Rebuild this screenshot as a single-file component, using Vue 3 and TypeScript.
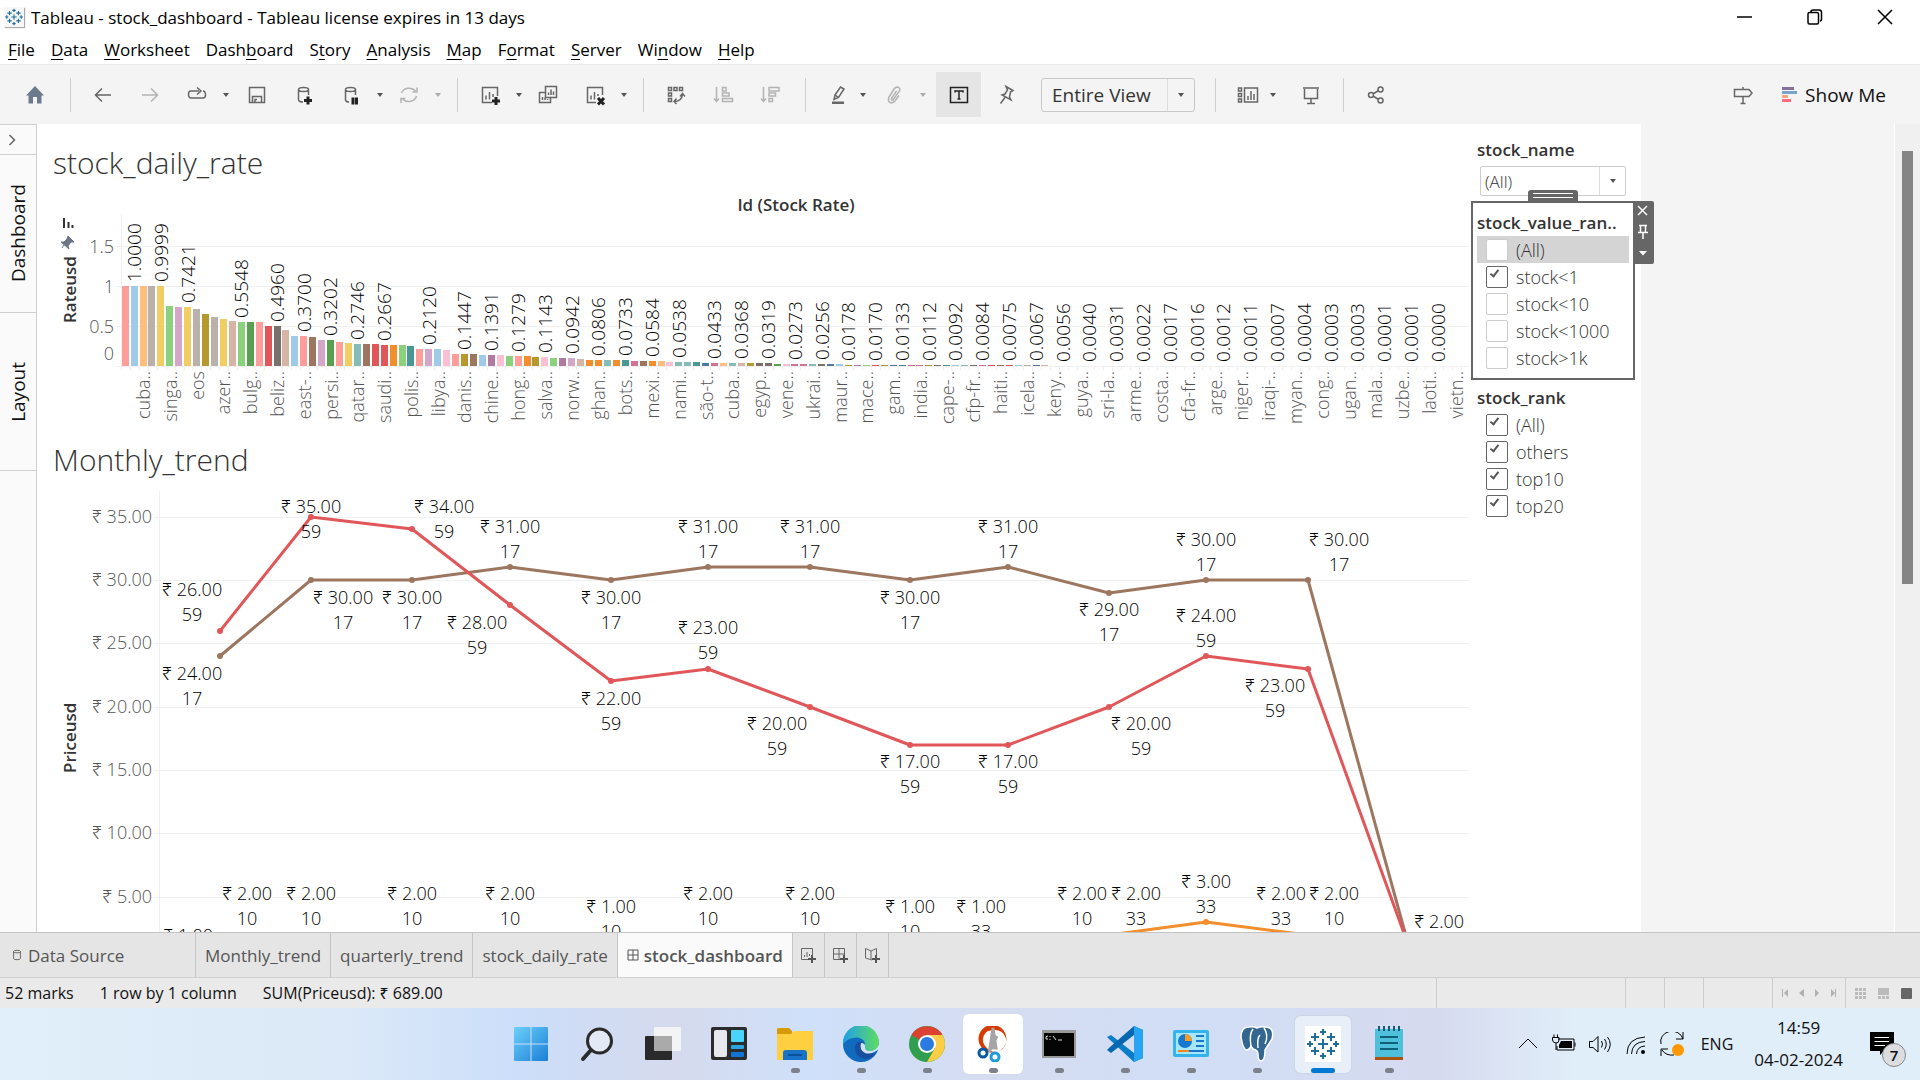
<script setup lang="ts">
import { ref } from 'vue'

interface Shape {
  d: string
  fill?: boolean
  dark?: boolean
}

const menus: [string, string, string][] = [
  ['', 'F', 'ile'],
  ['', 'D', 'ata'],
  ['', 'W', 'orksheet'],
  ['Dash', 'b', 'oard'],
  ['S', 't', 'ory'],
  ['', 'A', 'nalysis'],
  ['', 'M', 'ap'],
  ['F', 'o', 'rmat'],
  ['', 'S', 'erver'],
  ['Wi', 'n', 'dow'],
  ['', 'H', 'elp'],
]

const icons: Record<string, Shape[]> = {
  back: [{ d: 'M20 12H5M11 5.500L4.500 12L11 18.500' }],
  forward: [{ d: 'M4 12H19M13 5.500L19.500 12L13 18.500' }],
  redo: [{ d: 'M14 8H6Q3.500 8 3.500 11Q3.500 15 6 15H18Q20.500 15 20.500 12Q20.500 8 18 8M12 4.500L16 8L12 11.500' }],
  save: [{ d: 'M4.500 4.500H19.500V19.500H4.500ZM7.500 19V13.500H16.500V19M10 19V16.500H12' }],
  dbAdd: [
    { d: 'M6.500 6.500V17Q7 19 11 19M16.500 6.500V12M6.500 6.500A5 2 0 0 1 16.500 6.500A5 2 0 0 1 6.500 6.500' },
    { d: 'M12 17.500H20M16 13.500V21.500', dark: true },
  ],
  dbPause: [
    { d: 'M6.500 6.500V17Q7 19 10 19M16.500 6.500V12M6.500 6.500A5 2 0 0 1 16.500 6.500A5 2 0 0 1 6.500 6.500' },
    { d: 'M14 14.500V21.500M17.500 14.500V21.500', dark: true },
  ],
  refresh: [{ d: 'M4.500 10A8 7 0 0 1 18.500 8M20 4.500V9H15.500M19.500 13A8 7 0 0 1 5.500 16M4 20V15.500H8.500' }],
  sheetAdd: [
    { d: 'M14 19.500H4.500V4.500H19.500V13M8 12.500V16.500M11.500 9V16.500M15 11V14' },
    { d: 'M14 18H22M18 14V22', dark: true },
  ],
  duplicate: [{ d: 'M9.500 3.500H20.500V14.500H9.500ZM12.500 9.500V12M15 6.500V12M17.500 8.500V12M9 9.500H3.500V19.500H14.500V15M6.500 14V17M9 14.500V17M11.500 16V17' }],
  clear: [
    { d: 'M13 19.500H4.500V4.500H19.500V12M8 12.500V16.500M11.500 9V16.500M15 11V13' },
    { d: 'M15 15L21 21.500M21 15L15 21.500', dark: true },
  ],
  swap: [{ d: 'M4.500 4.500H7.500V7.500H4.500ZM10 4.500H13V7.500H10ZM15.500 4.500H18.500V7.500H15.500ZM4.500 10H7.500V13H4.500ZM4.500 15.500H7.500V18.500H4.500ZM10 18.500Q18 18.500 18.500 11M16 13.500L18.500 10.500L21 13.500M12.500 15.500L10 18.500L12.500 21' }],
  asc: [{ d: 'M5.500 4V18M3 15.500L5.500 18.500L8 15.500M11.500 4.500H15V8H11.500ZM11.500 10H18V13H11.500ZM11.500 15.500H21.500V18.500H11.500Z' }],
  desc: [{ d: 'M5.500 4V18M3 15.500L5.500 18.500L8 15.500M11 4.500H21V8H11ZM11 10H17.500V13H11ZM11 15.500H14.500V18.500H11Z' }],
  marker: [
    { d: 'M9 12L14.500 4L18 6L12.500 14.500L8 16.500ZM9 12L12.500 14.500' },
    { d: 'M6 18.500H18V21H6Z', fill: true },
  ],
  clip: [{ d: 'M14.500 8L9.500 15.500Q9 17.500 11 17L17.500 8Q18.500 4.500 15.500 4Q13.500 4 12 6L7 14Q5.500 18 8 19.500Q11 20.500 13 18L17 12.500' }],
  text: [{ d: 'M3.500 4.500H20.500V19.500H3.500ZM8 9.500V8H16V9.500M12 8V16M10.500 16H13.500' }],
  pin: [{ d: 'M12 3.500L19 7.500L16.500 9L15.500 14L17 17L8 12L11 11L13.500 7ZM11 14.500L6.500 20.500' }],
  cards: [{ d: 'M2.500 5H5.500V8H2.500ZM2.500 10.500H5.500V13.500H2.500ZM2.500 16H5.500V19H2.500ZM8.500 5H21.500V19H8.500ZM12 13V17M15 8V17M18 11V17' }],
  present: [{ d: 'M4 5H20M5.500 6V15.500H18.500V6M12 15.500V20M8 20.500H16' }],
  share: [{ d: 'M7 9.500A2.500 2.500 0 1 0 7 14.500A2.500 2.500 0 1 0 7 9.500ZM16.500 4A2.500 2.500 0 1 0 16.500 9A2.500 2.500 0 1 0 16.500 4ZM16.500 15A2.500 2.500 0 1 0 16.500 20A2.500 2.500 0 1 0 16.500 15ZM9 11L14.500 7.500M9 13L14.500 16.500' }],
  guide: [{ d: 'M3.500 6.500H18L21 10L18 13.500H3.500ZM12 4V6.500M12 13.500V20.500M9.500 20.500H14.500' }],
}

interface Tool {
  icon?: string
  kind?: 'caret' | 'sep'
  gap: string
  dim?: boolean
  on?: boolean
}
const toolsA: Tool[] = [
  { kind: 'sep', gap: 'g23' },
  { icon: 'back', gap: 'g20' },
  { icon: 'forward', gap: 'g23', dim: true },
  { icon: 'redo', gap: 'g23' },
  { kind: 'caret', gap: 'g11' },
  { icon: 'save', gap: 'g13' },
  { icon: 'dbAdd', gap: 'g23' },
  { icon: 'dbPause', gap: 'g23' },
  { kind: 'caret', gap: 'g11' },
  { icon: 'refresh', gap: 'g11', dim: true },
  { kind: 'caret', gap: 'g11', dim: true },
  { kind: 'sep', gap: 'g13' },
  { icon: 'sheetAdd', gap: 'g20' },
  { kind: 'caret', gap: 'g11' },
  { icon: 'duplicate', gap: 'g11' },
  { icon: 'clear', gap: 'g23' },
  { kind: 'caret', gap: 'g11' },
  { kind: 'sep', gap: 'g13' },
  { icon: 'swap', gap: 'g20' },
  { icon: 'asc', gap: 'g23', dim: true },
  { icon: 'desc', gap: 'g23', dim: true },
  { kind: 'sep', gap: 'g23' },
  { icon: 'marker', gap: 'g20' },
  { kind: 'caret', gap: 'g7' },
  { icon: 'clip', gap: 'g13', dim: true },
  { kind: 'caret', gap: 'g11', dim: true },
  { icon: 'text', gap: 'g7', on: true },
  { icon: 'pin', gap: 'g13' },
]
const toolsB: Tool[] = [
  { kind: 'sep', gap: 'g20' },
  { icon: 'cards', gap: 'g20' },
  { kind: 'caret', gap: 'g7' },
  { icon: 'present', gap: 'g20' },
  { kind: 'sep', gap: 'g20' },
  { icon: 'share', gap: 'g20' },
]

/* daily rate bars: colour key and height in chart units */
const palette: Record<string, string> = {
  k: '#ff9d9a', a: '#a0cbe8', o: '#ffbe7d', g: '#bab0ac', y: '#f1ce63', n: '#8cd17d', l: '#d4a6c8',
  m: '#b6992d', t: '#d7b5a6', G: '#59a14f', r: '#e15759', d: '#79706e', b: '#9d7660', c: '#86bcb6',
  O: '#f28e2b', T: '#499894', p: '#fabfd2', v: '#b07aa1', R: '#d37295', B: '#4e79a7',
}
const barKeys =
  'kaogynlygmgytnGkrdtakblGkycbrrOnTklapkmbavpnkOmpnvltOOcOTRbOopccTBRoctmddGpRRcdBamvnrmBBRRmdTacdRrbragBt'
const barHeights = [
  80, 80, 80, 80, 80, 60, 59, 59, 57, 52, 49, 47, 45, 44, 44, 44, 40, 40, 36, 30, 30, 29, 26, 26, 24, 23,
  22, 22, 22, 21, 21, 21, 20, 17, 17, 17, 16, 12, 12, 12, 11, 11, 11, 10, 10, 10, 9, 9, 8, 8, 8, 7,
  6, 6, 6, 6, 6, 5, 5, 5, 5, 4, 4, 4, 4, 3, 3, 3, 3, 3, 3, 3, 3, 2, 2, 2, 2, 2, 2, 2, 2,
]
const pitch = 8.93
const bars = barKeys.split('').map((key, i) => ({
  x: Math.floor(122.2 + i * pitch),
  h: barHeights[i] ?? 1,
  color: palette[key],
}))

const valueIndex = [1, 4, 7, 13, 17, 20, 23, 26, 29, 34, 38, 41, 44, 47, 50, 53, 56, 59, 62]
for (let i = 66; i <= 147; i += 3) valueIndex.push(i)
const valueText = (
  '1.0000 0.9999 0.7421 0.5548 0.4960 0.3700 0.3202 0.2746 0.2667 0.2120 0.1447 0.1391 0.1279 0.1143 0.0942 ' +
  '0.0806 0.0733 0.0584 0.0538 0.0433 0.0368 0.0319 0.0273 0.0256 0.0178 0.0170 0.0133 0.0112 0.0092 0.0084 ' +
  '0.0075 0.0067 0.0056 0.0040 0.0031 0.0022 0.0017 0.0016 0.0012 0.0011 0.0007 0.0004 0.0003 0.0003 0.0001 ' +
  '0.0001 0.0000'
).split(' ')
const values = valueText.map((text, i) => {
  const at = valueIndex[i]
  return { text, x: Math.round(132 + at * pitch), y: 362 - (at < 104 ? (barHeights[at] ?? 1) : 0) }
})

const names = (
  'cuba.. singa.. eos azer.. bulg.. beliz.. east-.. persi.. qatar.. saudi.. polis.. libya.. danis.. chine.. ' +
  'hong.. salva.. norw.. ghan.. bots.. mexi.. nami.. são-t.. cuba.. egyp.. vene.. ukrai.. maur.. mace.. ' +
  'gam.. india.. cape-.. cfp-fr.. haiti.. icela.. keny.. guya.. sri-la.. arme.. costa.. cfa-fr.. arge.. ' +
  'niger.. iraqi-.. myan.. cong.. ugan.. mala.. uzbe.. laoti.. vietn..'
)
  .split(' ')
  .map((text, i) => ({ text, x: Math.round(150 + i * 3 * pitch) }))
const ticks = Array.from({ length: 151 }, (_, i) => Math.round(121 + i * pitch))
const rateAxis: [string, number][] = [['1.5', 253], ['1', 293], ['0.5', 333], ['0', 360]]

/* monthly trend */
const monthX = [220, 311, 412, 510, 611, 708, 810, 910, 1008, 1109, 1206, 1308, 1409]
const priceY = (v: number) => Math.round(960 - v * 12.67)
const line = (vals: number[], from = 0) => vals.map((v, i) => `${monthX[i + from]},${priceY(v)}`).join(' ')
const series = [
  { color: '#9d7660', from: 0, v: [24, 30, 30, 31, 30, 31, 31, 30, 31, 29, 30, 30, 1] },
  { color: '#e15759', from: 0, v: [26, 35, 34, 28, 22, 23, 20, 17, 17, 20, 24, 23, 1] },
  { color: '#f28e2b', from: 9, v: [2, 3, 2] },
]
const priceAxis = [35, 30, 25, 20, 15, 10, 5]
const marks: [number, number, string, string][] = [
  [192, 596, '26', '59'], [311, 513, '35', '59'], [444, 513, '34', '59'], [477, 629, '28', '59'],
  [611, 705, '22', '59'], [708, 634, '23', '59'], [777, 730, '20', '59'], [910, 768, '17', '59'],
  [1008, 768, '17', '59'], [1141, 730, '20', '59'], [1206, 622, '24', '59'], [1275, 692, '23', '59'],
  [192, 680, '24', '17'], [343, 604, '30', '17'], [412, 604, '30', '17'], [510, 533, '31', '17'],
  [611, 604, '30', '17'], [708, 533, '31', '17'], [810, 533, '31', '17'], [910, 604, '30', '17'],
  [1008, 533, '31', '17'], [1109, 616, '29', '17'], [1206, 546, '30', '17'], [1339, 546, '30', '17'],
  [247, 900, '2', '10'], [311, 900, '2', '10'], [412, 900, '2', '10'], [510, 900, '2', '10'],
  [611, 913, '1', '10'], [708, 900, '2', '10'], [810, 900, '2', '10'], [910, 913, '1', '10'],
  [981, 913, '1', '33'], [1082, 900, '2', '10'], [1136, 900, '2', '33'], [1206, 888, '3', '33'],
  [1281, 900, '2', '33'], [1334, 900, '2', '10'], [1439, 928, '2', ''], [188, 942, '1', ''],
]

const valueRange = ref([
  { label: '(All)', on: false },
  { label: 'stock<1', on: true },
  { label: 'stock<10', on: false },
  { label: 'stock<1000', on: false },
  { label: 'stock>1k', on: false },
])
const rank = ref([
  { label: '(All)', on: true },
  { label: 'others', on: true },
  { label: 'top10', on: true },
  { label: 'top20', on: true },
])

const crosses: [number, number, number][] = [
  [18, 18, 5], [10, 11, 4], [26, 11, 4], [10, 25, 4], [26, 25, 4], [18, 6, 3], [18, 30, 3], [5, 18, 3], [31, 18, 3],
]
const crossPath = crosses.map(([x, y, r]) => `M${x - r} ${y}H${x + r}M${x} ${y - r}V${y + r}`).join('')
</script>

<template>
  <div class="desktop">
    <header class="titlebar">
      <svg class="logo" viewBox="0 0 36 36" aria-hidden="true"><path :d="crossPath" /></svg>
      <span class="caption">Tableau - stock_dashboard - Tableau license expires in 13 days</span>
      <div class="winbtns">
        <button aria-label="Minimize"><svg viewBox="0 0 16 16"><path d="M0 8H15" /></svg></button>
        <button aria-label="Restore">
          <svg viewBox="0 0 16 16"><path d="M1 5Q1 3.500 2.500 3.500H10Q11.500 3.500 11.500 5V13.500Q11.500 15 10 15H2.500Q1 15 1 13.500ZM4 3V2.500Q4 1 6 1H12Q14.500 1 14.500 3.500V10Q14.500 12 13 12" /></svg>
        </button>
        <button aria-label="Close"><svg viewBox="0 0 16 16"><path d="M1 1L15 15M15 1L1 15" /></svg></button>
      </div>
    </header>

    <nav class="menubar">
      <button v-for="m in menus" :key="m.join('')">{{ m[0] }}<u>{{ m[1] }}</u>{{ m[2] }}</button>
    </nav>

    <div class="toolbar">
      <button class="tool" aria-label="Start page">
        <svg viewBox="0 0 24 24"><path class="home" d="M12 3L21 12.500H18.500V20.500H14V14H10V20.500H5.500V12.500H3Z" /></svg>
      </button>
      <template v-for="(t, i) in toolsA" :key="'a' + i">
        <i v-if="t.kind === 'sep'" class="sep" :class="t.gap"></i>
        <button v-else-if="t.kind === 'caret'" class="caret" :class="[t.gap, { dim: t.dim }]" aria-label="More"></button>
        <button v-else class="tool" :class="[t.gap, { dim: t.dim, on: t.on }]" :aria-label="t.icon">
          <svg viewBox="0 0 24 24">
            <path v-for="(s, j) in icons[t.icon!]" :key="j" :d="s.d" :class="{ solid: s.fill, dark: s.dark }" />
          </svg>
        </button>
      </template>
      <div class="fit g23">
        <select aria-label="Fit"><option>Entire View</option></select>
        <i class="arrow"></i>
      </div>
      <template v-for="(t, i) in toolsB" :key="'b' + i">
        <i v-if="t.kind === 'sep'" class="sep" :class="t.gap"></i>
        <button v-else-if="t.kind === 'caret'" class="caret" :class="t.gap" aria-label="More"></button>
        <button v-else class="tool" :class="t.gap" :aria-label="t.icon">
          <svg viewBox="0 0 24 24"><path v-for="(s, j) in icons[t.icon!]" :key="j" :d="s.d" /></svg>
        </button>
      </template>
      <div class="tools-end">
        <button class="tool" aria-label="Data guide">
          <svg viewBox="0 0 24 24"><path v-for="(s, j) in icons.guide" :key="j" :d="s.d" /></svg>
        </button>
        <button class="showme">
          <svg viewBox="0 0 16 16" aria-hidden="true">
            <rect width="12" height="3" fill="#866f9a" /><rect y="4" width="15" height="3" fill="#7aa3cc" />
            <rect y="8" width="6" height="3" fill="#f4a582" /><rect y="12" width="9" height="3" fill="#ff6b7a" />
          </svg>
          Show Me
        </button>
      </div>
    </div>

    <main class="work">
      <aside class="rail">
        <button class="expand" aria-label="Expand"><svg viewBox="0 0 8 12"><path d="M1.500 1L6.500 6L1.500 11" /></svg></button>
        <button class="vtab"><span>Dashboard</span></button>
        <button class="vtab"><span>Layout</span></button>
      </aside>

      <section class="board">
        <div class="charts">
          <h2 class="first">stock_daily_rate</h2>
          <svg class="chart" viewBox="37 190 1434 250">
            <g class="grid">
              <path d="M116 246.500H1469M116 286.500H1469M116 326.500H1469M116 366.500H1469M121.500 214V366" />
              <path v-for="x in ticks" :key="x" :d="`M${x}.500 366V370`" />
            </g>
            <text class="head" x="796" y="211" text-anchor="middle">Id (Stock Rate)</text>
            <text v-for="[t, y] in rateAxis" :key="t" class="axis" x="114" :y="y" text-anchor="end">{{ t }}</text>
            <text class="head" transform="translate(76 323) rotate(-90)">Rateusd</text>
            <path class="pinned" d="M68 236L74 242L71 242L68 246L69 249L61 242L64 242L67 239ZM64 245L62 248" />
            <path class="sorted" d="M64 218V228M68.500 222V228M72.500 225V228" />
            <rect v-for="b in bars" :key="b.x" :x="b.x" :y="366 - b.h" width="7" :height="b.h" :fill="b.color" />
            <text v-for="v in values" :key="v.x" class="val" :transform="`translate(${v.x} ${v.y}) rotate(-90)`">{{ v.text }}</text>
            <text v-for="n in names" :key="n.x" class="cat" text-anchor="end" :transform="`translate(${n.x} 371) rotate(-90)`">{{ n.text }}</text>
          </svg>
          <h2>Monthly_trend</h2>
          <svg class="chart" viewBox="37 490 1434 450">
            <g class="grid">
              <path v-for="p in priceAxis" :key="p" :d="`M154 ${priceY(p)}.500H1469`" />
              <path d="M159.500 491V940" />
            </g>
            <text v-for="p in priceAxis" :key="p" class="axis" x="152" :y="priceY(p) + 6" text-anchor="end">₹ {{ p }}.00</text>
            <text class="head" transform="translate(76 773) rotate(-90)">Priceusd</text>
            <g v-for="s in series" :key="s.color">
              <polyline :points="line(s.v, s.from)" :stroke="s.color" class="trend" />
              <circle v-for="(v, i) in s.v" :key="i" :cx="monthX[i + s.from]" :cy="priceY(v)" r="3" :fill="s.color" />
            </g>
            <template v-for="(m, i) in marks" :key="i">
              <text class="mark" :x="m[0]" :y="m[1]" text-anchor="middle">₹ {{ m[2] }}.00</text>
              <text v-if="m[3]" class="mark" :x="m[0]" :y="m[1] + 25" text-anchor="middle">{{ m[3] }}</text>
            </template>
          </svg>
        </div>

        <div class="filters">
          <label class="ftitle" for="stock-name">stock_name</label>
          <div class="namebox">
            <select id="stock-name"><option>(All)</option></select>
            <i class="arrow"></i>
          </div>
          <fieldset class="picked">
            <div class="grip"></div>
            <div class="ftitle">stock_value_ran..</div>
            <label v-for="(o, i) in valueRange" :key="o.label" class="opt" :class="{ hover: i === 0 }">
              <input v-model="o.on" type="checkbox" />{{ o.label }}
            </label>
            <div class="handle">
              <svg viewBox="0 0 20 62" aria-hidden="true">
                <path d="M5 5L14 14M14 5L5 14M6 24.500H14M7.500 24.500V31M12.500 24.500V31M5 31.500H15M10 32V38" />
                <path d="M6 50H14L10 54.500Z" fill="#fff" stroke="none" />
              </svg>
            </div>
          </fieldset>
          <fieldset class="ranks">
            <div class="ftitle">stock_rank</div>
            <label v-for="o in rank" :key="o.label" class="opt">
              <input v-model="o.on" type="checkbox" />{{ o.label }}
            </label>
          </fieldset>
        </div>
      </section>
      <div class="canvas"></div>
      <div class="scroll"><div class="thumb"></div></div>
    </main>

    <nav class="tabs">
      <button class="tab source">
        <svg viewBox="0 0 10 14" aria-hidden="true"><path d="M1 3V11A4 1.500 0 0 0 9 11V3M1 3A4 1.500 0 0 1 9 3A4 1.500 0 0 1 1 3" /></svg>Data Source
      </button>
      <button class="tab">Monthly_trend</button>
      <button class="tab">quarterly_trend</button>
      <button class="tab">stock_daily_rate</button>
      <button class="tab active">
        <svg viewBox="0 0 12 12" aria-hidden="true"><path d="M1 1H11V11H1ZM6 1V11M1 6H11" /></svg>stock_dashboard
      </button>
      <button class="add" aria-label="New worksheet">
        <svg viewBox="0 0 16 16"><path d="M8 12.500H1.500V1.500H12.500V8M4.500 8V10M7 5V10M9.500 7V9" /><path class="plus" d="M8 12H16M12 8V16" /></svg>
      </button>
      <button class="add" aria-label="New dashboard">
        <svg viewBox="0 0 16 16"><path d="M8 12.500H1.500V1.500H12.500V8M7 1.500V12.500M1.500 7H12.500" /><path class="plus" d="M8 12H16M12 8V16" /></svg>
      </button>
      <button class="add" aria-label="New story">
        <svg viewBox="0 0 16 16"><path d="M8 13L1.500 11V1.500L7 4L12.500 1.500V8M7 4V12" /><path class="plus" d="M8 12H16M12 8V16" /></svg>
      </button>
    </nav>

    <footer class="status">
      <span>52 marks</span><span>1 row by 1 column</span><span>SUM(Priceusd): ₹ 689.00</span>
      <div class="cells">
        <i class="c189"></i><i class="c39"></i><i class="c39"></i><i class="c69"></i>
        <div class="c73 pager">
          <svg viewBox="0 0 56 10" aria-hidden="true"><path d="M1 1H2V9H1ZM7 1V9L3 5ZM23 1V9L18 5ZM34 1V9L38 5ZM50 1V9L54 5ZM54 1H55V9H54Z" /></svg>
        </div>
        <div class="views">
          <svg viewBox="0 0 58 12" aria-hidden="true">
            <path fill="#bbb" d="M0 1H3V4H0ZM4 1H7V4H4ZM8 1H11V4H8ZM0 5H3V8H0ZM4 5H7V8H4ZM8 5H11V8H8ZM0 9H3V12H0ZM4 9H7V12H4ZM8 9H11V12H8ZM23 1H34V8H23ZM23 9H26V12H23ZM27 9H30V12H27ZM31 9H34V12H31Z" />
            <rect x="46" y="1" width="11" height="11" rx="1" fill="#666" />
          </svg>
        </div>
      </div>
    </footer>

    <div class="taskbar">
      <div class="apps">
        <button class="app" aria-label="Start">
          <svg viewBox="0 0 36 36"><defs><linearGradient id="win" x2="1" y2="1"><stop stop-color="#6cd0fb" /><stop offset="1" stop-color="#1b7fd6" /></linearGradient></defs>
            <path fill="url(#win)" d="M1 2Q1 1 2 1H17.500V17.500H1ZM18.500 1H34Q35 1 35 2V17.500H18.500ZM1 18.500H17.500V35H2Q1 35 1 34ZM18.500 18.500H35V34Q35 35 34 35H18.500Z" /></svg>
        </button>
        <button class="app" aria-label="Search">
          <svg viewBox="0 0 36 36"><circle cx="20.500" cy="15" r="12" fill="#e3e9f5" stroke="#2b2b2b" stroke-width="3" /><path d="M12 24L4 33" stroke="#2b2b2b" stroke-width="4" stroke-linecap="round" /></svg>
        </button>
        <button class="app" aria-label="Task view">
          <svg viewBox="0 0 36 36"><rect y="10" width="27" height="24" rx="1" fill="#2a2a2a" /><rect x="9" y="1" width="27" height="24" rx="1" fill="#f4f4f4" /><path d="M9 10H27V25H9Z" fill="#aaa" /></svg>
        </button>
        <button class="app" aria-label="Widgets">
          <svg viewBox="0 0 36 36"><rect y="1" width="36" height="33" rx="2" fill="#2b2b2b" /><rect x="3" y="4" width="13" height="27" rx="2" fill="#e6e8ec" /><rect x="20" y="4" width="13" height="12" rx="1" fill="#4bd4fb" /><rect x="20" y="19" width="13" height="4" rx="1" fill="#2aa5e2" /><rect x="20" y="26" width="13" height="5" rx="1" fill="#1173d4" /></svg>
        </button>
        <button class="app run" aria-label="File Explorer">
          <svg viewBox="0 0 36 36"><path d="M0 3Q0 2 2 2H12L15 5V9H0Z" fill="#d99a08" /><path d="M0 8H14L17 5H36V34H0Z" fill="#ffcf42" /><path d="M6 34V27Q6 24 9 24H27Q30 24 30 27V34Z" fill="#1673c8" /><path d="M11 29H25" stroke="#0b4f94" stroke-width="2" /></svg>
        </button>
        <button class="app run" aria-label="Edge">
          <svg viewBox="0 0 36 36"><defs><linearGradient id="eg" x2="1"><stop stop-color="#1d9fe8" /><stop offset="1" stop-color="#5fdc62" /></linearGradient></defs>
            <circle cx="18" cy="18" r="18" fill="#0f6ac0" /><path d="M0 18A18 18 0 0 1 36 16Q36 25 27 25Q21 25 21 21Q23 18 21 15Q17 10 10 12Q4 13 0 18Z" fill="url(#eg)" /><path d="M12 20Q11 32 24 33Q30 31 33 27Q27 29 22 26Q18 23 21 17Q14 14 12 20Z" fill="#174f9c" /><path d="M18 17Q16 24 22 27Q28 29 36 23V18Q34 25 27 25Q21 25 22 20Q22 17 18 17Z" fill="#d6e0f3" /></svg>
        </button>
        <button class="app run" aria-label="Chrome">
          <svg viewBox="0 0 36 36"><circle cx="18" cy="18" r="18" fill="#2f9e4f" /><path d="M18 18L2.500 9A18 18 0 0 1 33.500 9Z" fill="#dc4132" /><path d="M18 9H33.500A18 18 0 0 1 18 36L26 22Z" fill="#fdce43" /><circle cx="18" cy="18" r="9" fill="#fff" /><circle cx="18" cy="18" r="7" fill="#2a7ae2" /></svg>
        </button>
        <button class="app run lit" aria-label="Snip">
          <svg viewBox="0 0 36 36"><path d="M10 1A14 14 0 1 1 9 24A14 14 0 0 1 10 1M13 5A10 10 0 0 0 11 21A11 11 0 1 0 19 4Z" fill="#d83b01" fill-rule="evenodd" /><path d="M18 2L21 22L15 22ZM22 10L14 26" stroke="#a5a5a5" stroke-width="3" fill="#bbb" /><circle cx="8" cy="27" r="4" fill="none" stroke="#0a58a6" stroke-width="3" /><circle cx="20" cy="31" r="4" fill="none" stroke="#1e9be0" stroke-width="3" /></svg>
        </button>
        <button class="app run" aria-label="Command Prompt">
          <svg viewBox="0 0 36 36"><rect x="1" y="4" width="34" height="28" fill="#9a9a9a" /><path d="M3 7H33V30H3Z" fill="#050505" /><path d="M7 10Q4 10 5 13H7M9 10V11M9 13V14M12 10L15 14M17 14H21" stroke="#ddd" fill="none" /></svg>
        </button>
        <button class="app run" aria-label="VS Code">
          <svg viewBox="0 0 36 36"><path d="M27 0L36 4V32L27 36L2 13L0 11L4 9L27 27Z" fill="#0a7cc8" /><path d="M27 0L36 4V32L27 36Z" fill="#27a5f2" /><path d="M27 9L4 27L0 24L3 21L27 0Z" fill="#0768b0" /></svg>
        </button>
        <button class="app run" aria-label="Control Panel">
          <svg viewBox="0 0 36 36"><rect y="4" width="36" height="27" rx="2" fill="#33b4ec" /><rect x="3" y="7" width="30" height="21" fill="#a8e6fb" /><circle cx="12" cy="15" r="7" fill="#1679cf" /><path d="M12 15V8A7 7 0 0 1 19 15Z" fill="#f99b22" /><path d="M23 10H31M23 15H31M23 20H31" stroke="#1679cf" stroke-width="2" /><path d="M5 25H31" stroke="#1679cf" stroke-width="2" /><path d="M5 25H16" stroke="#f9861a" stroke-width="2" /></svg>
        </button>
        <button class="app run" aria-label="pgAdmin">
          <svg viewBox="0 0 36 36"><path d="M10 1Q2 1 2 11Q4 24 8 24Q10 24 12 20L14 23Q19 24 19 28Q19 35 22 35Q26 35 26 24Q29 19 33 13Q36 1 26 1Q22 0 18 2Q14 0 10 1Z" fill="#336791" stroke="#fff" stroke-width="1.500" /><path d="M14 3Q10 8 12 20M25 2Q30 9 26 18M21 9Q18 12 19 22" fill="none" stroke="#fff" stroke-width="1.500" /></svg>
        </button>
        <button class="app run current" aria-label="Tableau">
          <svg class="tableau" viewBox="0 0 36 36"><rect width="36" height="36" fill="#fff" /><path :d="crossPath" /></svg>
        </button>
        <button class="app run" aria-label="Notepad">
          <svg viewBox="0 0 36 36"><path d="M4 3H32V31H4Z" fill="#4fc0dc" /><path d="M4 31H32L32 34H4Z" fill="#a8530f" /><path d="M9 11H27M9 17H27M9 23H27" stroke="#0d6079" stroke-width="2" /><path d="M8 0V5M13 0V5M18 0V5M23 0V5M28 0V5" stroke="#155a70" stroke-width="2" /></svg>
        </button>
      </div>
      <div class="tray">
        <svg class="w24" viewBox="0 0 24 24" aria-hidden="true"><path d="M3 16L12 7L21 16" /></svg>
        <svg class="w24" viewBox="0 0 24 24" aria-hidden="true"><path d="M6 7H22V18H5V14M23 10.500V14.500" /><path d="M9 9H20V16H7V13Z" fill="#000" stroke="none" /><path d="M2 5V2.500M5.500 5V2.500M0.500 5.500H7V8Q7 11 4 11Q1 11 0.500 8ZM4 11V18" /></svg>
        <svg class="w24" viewBox="0 0 24 24" aria-hidden="true"><path d="M1.500 9.500H5L10 4.500V20L5 15.500H1.500ZM13.500 9Q15.500 12 13.500 15.500M16.500 7Q20 12 16.500 17.500M19.500 5Q25 12 19.500 20" /></svg>
        <svg class="w24" viewBox="0 0 24 24" aria-hidden="true"><path d="M3 22Q3 6 21 5M7.500 22Q8 10 21 9.500M12.500 22Q13 14.500 21 14" /><circle cx="19" cy="20" r="2" fill="#000" stroke="none" /></svg>
        <svg class="w24" viewBox="0 0 24 24" aria-hidden="true"><path d="M1 12A11 10 0 0 1 23 7M23 0V7H16M1 24V17H8M2 18Q6 24 14 23" /><circle cx="18" cy="18" r="6" fill="#ff9800" stroke="none" /></svg>
        <span class="lang">ENG</span>
        <time class="clock">14:59<br />04-02-2024</time>
        <div class="notes">
          <svg viewBox="0 0 26 26" aria-hidden="true"><path d="M1 1H25V20H15L11 24V20H1Z" fill="#000" stroke="none" /><path d="M5.500 6.500H20M5.500 10.500H20M5.500 14.500H16" stroke="#fff" /></svg>
          <span>7</span>
        </div>
      </div>
    </div>
  </div>
</template>

<style>
body {
  margin: 0;
}
</style>

<style scoped>
.desktop {
  display: flex;
  flex-direction: column;
  height: 100vh;
  background: #fff;
  color: #333;
  font-family: 'Open Sans', 'Noto Sans', sans-serif;
  font-size: 18px;
  overflow: hidden;
}
button {
  border: 0;
  padding: 0;
  margin: 0;
  background: none;
  font: inherit;
  color: inherit;
}
svg {
  display: block;
  fill: none;
}
.titlebar {
  display: flex;
  align-items: center;
  height: 34px;
  padding-left: 4px;
  color: #000;
  font-size: 17px;
}
.logo {
  width: 20px;
  height: 20px;
  margin-right: 7px;
  background: #f7f7f7;
  box-shadow: 1px 1px 1px #aaa;
}
.logo path,
.tableau path {
  stroke: #1f6e9c;
  stroke-width: 2;
}
.winbtns {
  display: flex;
  margin-left: auto;
}
.winbtns button {
  width: 70px;
  display: flex;
  justify-content: center;
}
.winbtns svg {
  width: 16px;
  height: 16px;
  stroke: #000;
  stroke-width: 1.500;
}
.menubar {
  display: flex;
  gap: 16px;
  height: 30px;
  padding-left: 8px;
  align-items: center;
  color: #000;
  font-size: 17px;
}
u {
  text-underline-offset: 3px;
}
.toolbar {
  display: flex;
  align-items: center;
  height: 60px;
  box-sizing: border-box;
  padding: 0 34px 0 23px;
  background: #f4f4f4;
  border-top: 1px solid #ebebeb;
}
.tool {
  width: 24px;
  height: 45px;
  display: flex;
  align-items: center;
  justify-content: center;
  flex: none;
}
.tool svg {
  width: 24px;
  height: 24px;
  stroke: #666;
  stroke-width: 1.500;
}
.tool .home {
  fill: #6b7a8c;
  stroke: none;
}
.tool .solid {
  fill: #666;
  stroke: none;
}
.tool .dark {
  stroke: #222;
  stroke-width: 3;
}
.tool.on {
  width: 45px;
  background: #e5e5e5;
}
.tool.on svg {
  stroke: #222;
}
.dim {
  opacity: 0.45;
}
.sep {
  width: 1px;
  height: 34px;
  background: #d0d0d0;
}
.caret {
  width: 12px;
  height: 24px;
  position: relative;
}
.caret::after,
.arrow::after {
  content: '';
  display: block;
  margin: auto;
  width: 0;
  border: 3px solid transparent;
  border-top: 4px solid #555;
  border-bottom: 0;
}
.g7 {
  margin-left: 7px;
}
.g11 {
  margin-left: 11px;
}
.g13 {
  margin-left: 13px;
}
.g20 {
  margin-left: 20px;
}
.g23 {
  margin-left: 23px;
}
select {
  appearance: none;
  border: 0;
  margin: 0;
  background: transparent;
  font: inherit;
  color: inherit;
  outline: 0;
}
.fit {
  display: flex;
  align-items: stretch;
  width: 154px;
  height: 34px;
  box-sizing: border-box;
  border: 1px solid #c8c8c8;
  border-radius: 3px;
  font-size: 19px;
}
.fit select {
  flex: 1;
  min-width: 0;
  padding-left: 10px;
}
.fit .arrow {
  width: 26px;
  display: flex;
  align-items: center;
  border-left: 1px solid #ddd;
}
.tools-end {
  display: flex;
  align-items: center;
  gap: 27px;
  margin-left: auto;
}
.showme {
  display: flex;
  align-items: center;
  gap: 7px;
  color: #111;
  font-size: 19px;
  white-space: nowrap;
}
.showme svg {
  width: 16px;
  height: 16px;
}
.work {
  display: flex;
  flex: 1;
  min-height: 0;
  overflow: hidden;
}
.rail {
  width: 36px;
  flex: none;
  background: #fafafa;
  border-right: 1px solid #d0d0d0;
  border-top: 1px solid #d0d0d0;
  color: #111;
}
.expand {
  display: block;
  width: 36px;
  height: 30px;
  border-bottom: 1px solid #d0d0d0;
}
.expand svg {
  width: 8px;
  height: 12px;
  margin-left: 8px;
  stroke: #666;
  stroke-width: 1.500;
}
.vtab {
  display: flex;
  align-items: center;
  justify-content: center;
  width: 36px;
  height: 158px;
  box-sizing: border-box;
  border-bottom: 1px solid #d0d0d0;
  font-size: 19px;
}
.vtab span {
  writing-mode: vertical-rl;
  transform: rotate(180deg);
}
.board {
  display: flex;
  flex: 1;
  min-width: 0;
  background: #fff;
}
.charts {
  flex: 1;
  min-width: 0;
}
.charts h2 {
  margin: 0;
  padding-left: 16px;
  height: 50px;
  line-height: 40px;
  font-size: 30px;
  font-weight: 300;
  color: #333;
}
.charts h2.first {
  height: 47px;
  padding-top: 19px;
}
.chart {
  width: 100%;
  height: auto;
}
.grid {
  stroke: #f0f0f0;
}
.head {
  font-size: 17px;
  font-weight: 600;
  fill: #333;
}
.axis,
.cat {
  font-size: 18px;
  font-weight: 300;
  fill: #555;
}
.val {
  font-size: 19px;
  font-weight: 300;
  fill: #000;
}
.mark {
  font-size: 18px;
  font-weight: 300;
  fill: #000;
}
.pinned {
  fill: #6b7688;
  stroke: #6b7688;
}
.sorted {
  stroke: #333;
  stroke-width: 2;
}
.trend {
  stroke-width: 3;
  stroke-linejoin: round;
}
.filters {
  width: 170px;
  flex: none;
  padding-top: 12px;
}
.ftitle {
  display: block;
  padding-left: 6px;
  line-height: 27px;
  font-size: 17px;
  font-weight: 600;
  color: #333;
  white-space: nowrap;
}
.namebox {
  display: flex;
  align-items: stretch;
  width: 146px;
  height: 30px;
  box-sizing: border-box;
  margin: 3px 0 5px 9px;
  border: 1px solid #ccc;
  border-radius: 2px;
  font-size: 17px;
  font-weight: 300;
}
.namebox select {
  flex: 1;
  min-width: 0;
  padding-left: 4px;
}
.namebox .arrow {
  width: 25px;
  display: flex;
  align-items: center;
  border-left: 1px solid #ddd;
}
fieldset {
  margin: 0;
  border: 0;
  padding: 0;
  min-width: 0;
}
.picked {
  position: relative;
  width: 164px;
  height: 179px;
  box-sizing: border-box;
  border: 2px solid #666;
  padding: 6px 4px 0;
}
.picked .ftitle {
  padding-left: 0;
}
.grip {
  position: absolute;
  left: 55px;
  top: -13px;
  width: 50px;
  height: 12px;
  box-sizing: border-box;
  border-radius: 3px 3px 0 0;
  border: solid #666;
  border-width: 3px 5px 4px;
  background: linear-gradient(#fff 1px, #666 1px, #666 4px, #fff 4px);
}
.handle {
  position: absolute;
  left: 160px;
  top: -2px;
  width: 21px;
  height: 63px;
  background: #666;
  border-radius: 0 2px 2px 0;
}
.handle svg {
  width: 20px;
  height: 62px;
  stroke: #fff;
  stroke-width: 1.500;
}
.opt {
  display: flex;
  align-items: center;
  gap: 8px;
  height: 27px;
  padding-left: 9px;
  font-size: 18px;
  font-weight: 300;
}
.opt.hover {
  background: #d4d4d4;
}
.ranks {
  padding-top: 4px;
}
.ranks .opt {
  padding-left: 15px;
}
input {
  appearance: none;
  position: relative;
  width: 22px;
  height: 22px;
  flex: none;
  margin: 0;
  border: 1px solid #ccc;
  border-radius: 2px;
  background: #fff;
}
input:checked {
  border-color: #666;
}
input:checked::after {
  content: '';
  position: absolute;
  left: 5px;
  top: 1px;
  width: 3px;
  height: 7px;
  border: solid #555;
  border-width: 0 2px 2px 0;
  transform: rotate(38deg);
}
.canvas {
  width: 253px;
  flex: none;
  background: #f4f4f4;
  border-right: 1px solid #fff;
}
.scroll {
  width: 25px;
  flex: none;
  background: #f0f0f0;
}
.thumb {
  width: 11px;
  height: 433px;
  margin: 27px 0 0 7px;
  background: #858585;
}
.tabs {
  display: flex;
  height: 45px;
  flex: none;
  box-sizing: border-box;
  border-top: 1px solid #c4c4c4;
  background: #e5e5e5;
  color: #555;
  font-size: 17px;
}
.tab,
.add {
  display: flex;
  align-items: center;
  justify-content: center;
  padding: 0 9px;
  border-right: 1px solid #c4c4c4;
  white-space: nowrap;
}
.tab svg {
  stroke: #555;
  width: 12px;
  height: 12px;
  margin-right: 5px;
}
.tab.source {
  width: 196px;
  box-sizing: border-box;
  justify-content: flex-start;
  padding-left: 11px;
}
.tab.active {
  background: #fafafa;
  font-weight: 600;
}
.add {
  width: 32px;
  box-sizing: border-box;
  padding: 0;
}
.add svg {
  width: 16px;
  height: 16px;
  stroke: #666;
}
.plus {
  stroke: #555;
  stroke-width: 2;
}
.status {
  display: flex;
  align-items: center;
  gap: 26px;
  height: 31px;
  flex: none;
  box-sizing: border-box;
  padding-left: 5px;
  border-top: 1px solid #d0d0d0;
  background: #eaeaea;
  color: #111;
  font-size: 16px;
}
.cells {
  display: flex;
  align-self: stretch;
  margin-left: auto;
}
.cells > * {
  box-sizing: border-box;
  border-left: 1px solid #ccc;
}
.c189 {
  width: 189px;
}
.c39 {
  width: 39px;
}
.c69 {
  width: 69px;
}
.c73 {
  width: 73px;
}
.pager,
.views {
  display: flex;
  align-items: center;
}
.pager svg {
  width: 56px;
  height: 10px;
  margin-left: 8px;
  fill: #b0b0b0;
}
.views {
  width: 75px;
}
.views svg {
  width: 58px;
  height: 12px;
  margin-left: 9px;
}
.taskbar {
  display: grid;
  grid-template-columns: 1fr auto 1fr;
  align-items: center;
  height: 72px;
  flex: none;
  background: linear-gradient(90deg, #e0eff9 0%, #dbe9f8 18%, #ccdefa 27%, #d5daed 35%, #cfe0fa 42%, #d5dcf0 52%, #d0def6 62%, #d6daef 75%, #e0eef9 82%, #e0eef9 100%);
  color: #111;
}
.apps {
  grid-column: 2;
  display: flex;
}
.app {
  position: relative;
  display: flex;
  align-items: center;
  justify-content: center;
  width: 60px;
  height: 60px;
  margin: 0 3px;
  border-radius: 6px;
}
.app svg {
  width: 36px;
  height: 36px;
}
.app.run::after {
  content: '';
  position: absolute;
  left: 26px;
  bottom: 1px;
  width: 9px;
  height: 5px;
  border-radius: 3px;
  background: #7d818c;
}
.app.lit {
  background: #fff;
}
.app.current {
  width: 56px;
  height: 57px;
  margin: 0 5px;
  align-self: center;
  background: #e9eff9;
  box-shadow: 0 0 1px 1px #ccd5e6;
}
.app.current::after {
  left: 16px;
  bottom: 0;
  width: 24px;
  background: #0078d4;
}
.tray {
  display: flex;
  align-items: center;
  justify-content: flex-end;
  gap: 12px;
  height: 72px;
  padding-right: 25px;
}
.tray svg {
  stroke: #000;
}
.w24 {
  width: 24px;
  height: 24px;
}
.lang {
  margin-left: 5px;
  font-size: 16px;
}
.clock {
  margin-left: 9px;
  text-align: center;
  line-height: 32px;
  font-size: 17px;
}
.notes {
  position: relative;
  width: 26px;
  height: 26px;
  margin: 0 0 0 14px;
}
.notes svg {
  width: 26px;
  height: 26px;
}
.notes span {
  position: absolute;
  left: 13px;
  top: 12px;
  width: 24px;
  height: 24px;
  box-sizing: border-box;
  border: 1px solid #888;
  border-radius: 50%;
  background: #dcdde0;
  font-size: 15px;
  font-weight: 600;
  line-height: 22px;
  text-align: center;
}
</style>
